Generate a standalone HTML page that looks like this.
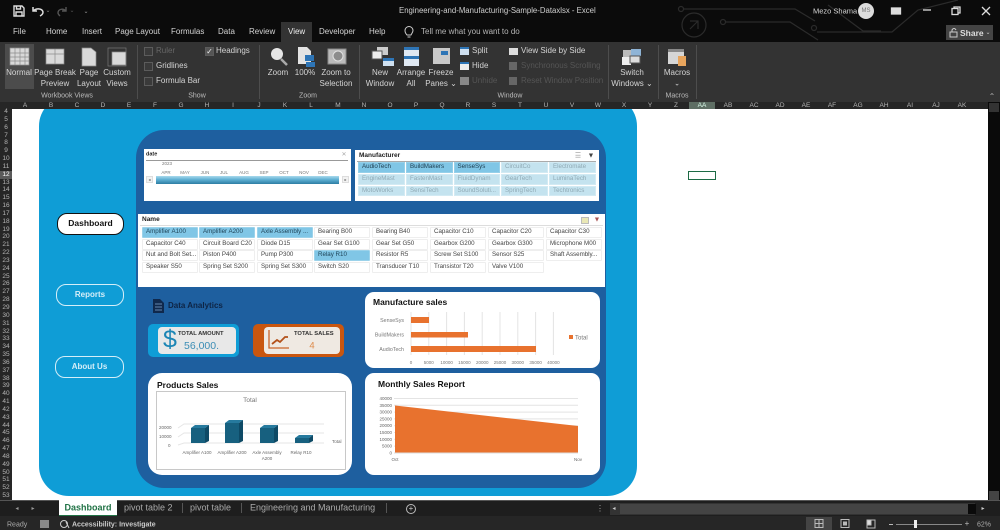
<!DOCTYPE html>
<html><head><meta charset="utf-8"><style>
html,body{margin:0;padding:0;background:#000}
#p{position:relative;width:1000px;height:530px;overflow:hidden;background:#0b0b0b;font-family:"Liberation Sans",sans-serif;filter:blur(.35px)}
#p div,#p span.t,#p span.l{position:absolute}
.t{white-space:nowrap;line-height:1;font-size:8px;color:#d4d4d4;transform:translate(-50%,-50%)}
.l{white-space:nowrap;line-height:1;font-size:8px;color:#d4d4d4;transform:translateY(-50%)}
.cb{width:9px;height:9px;border:1px solid #5c5c5c;box-sizing:border-box;background:#3a3a3a}
.sep{width:1px;top:45px;height:54px;background:#4d4d4d}
#cols{left:12px;top:102px;width:976px;height:7px;background:#262626}
#cols span{position:absolute;top:0;width:26px;text-align:center;font-size:6.5px;line-height:7px;color:#b5b5b5}
#rows{left:0;top:108px;width:12px;height:392px;background:#262626}
#rows span{position:absolute;left:0;width:12px;text-align:center;font-size:6.5px;line-height:8px;color:#b5b5b5}
.b{box-sizing:border-box;height:10.5px;width:56px;background:#fff;border:1px solid #eee;border-radius:1px;font-size:6.2px;line-height:8.5px;color:#444;padding-left:3px;white-space:nowrap;overflow:hidden}
.s{background:#80c6e6;border-color:#9bd2ea;color:#21465a}
.m{box-sizing:border-box;width:46.5px;height:10.5px;background:#c4e3ef;border:1px solid #d2eaf3;font-size:6.2px;line-height:8.5px;color:#8fa9b4;padding-left:3px;white-space:nowrap;overflow:hidden}
.ms{background:#80c6e6;color:#1d3c4e;border-color:#96d0e9}
.nav{box-sizing:border-box;border-radius:10px;text-align:center;font-size:8px;line-height:19px;height:22px;border:1.5px solid #d5eef8;color:#d6eef8;background:#0f9dd6}
svg text{font-family:"Liberation Sans",sans-serif}
</style></head><body><div id="p">

<!-- title bar art -->
<svg style="position:absolute;left:660px;top:0" width="340" height="42" fill="none" stroke="#2b2b2b" stroke-width="1.2">
<circle cx="21" cy="9" r="2.5"/><path d="M24 9H135l20 12h0"/><circle cx="63" cy="22" r="2.5"/><path d="M66 22H130l28 18"/><circle cx="34" cy="25" r="12"/><path d="M30 29l8-8M30 21h8v8" /><circle cx="154" cy="28" r="2.5"/><path d="M157 32H232l26-22 40-10"/><path d="M168 5l35 26h18"/>
</svg>

<!-- quick access -->
<svg style="position:absolute;left:13px;top:5px" width="12" height="12" fill="none" stroke="#ddd" stroke-width="1.4"><path d="M1 1h8l2 2v8H1z"/><path d="M3.5 1v3h4V1M3 11V7h6v4"/></svg>
<svg style="position:absolute;left:31px;top:5px" width="14" height="12" fill="none" stroke="#ddd" stroke-width="1.5"><path d="M2 2v4h4M2 6c3-3 9-3 10 1 0 2-1 3-3 4"/></svg>
<span class="t" style="left:48px;top:11px;font-size:6px;color:#888">⌄</span>
<svg style="position:absolute;left:56px;top:5px" width="12" height="12" fill="none" stroke="#555" stroke-width="1.4"><path d="M10 2v4H6M10 6C7 3 2 4 2 8c0 1 1 2 2 3"/></svg>
<span class="t" style="left:72px;top:11px;font-size:6px;color:#555">⌄</span>
<span class="t" style="left:86px;top:12px;font-size:6px;color:#999">⌄</span>

<span class="l" style="left:399px;top:11px;font-size:7.8px;color:#cfcfcf">Engineering-and-Manufacturing-Sample-Dataxlsx  -  Excel</span>
<span class="l" style="left:813px;top:11px;font-size:7.5px;color:#d4d4d4">Mezo Shama</span>
<div style="left:858px;top:3px;width:16px;height:16px;border-radius:50%;background:#dcdcdc"></div>
<span class="t" style="left:866px;top:11px;font-size:6px;color:#777">MS</span>
<svg style="position:absolute;left:890px;top:4px" width="110" height="14" fill="none" stroke="#ddd" stroke-width="1.3"><rect x="1.5" y="4" width="9" height="6" fill="#ddd"/><path d="M33 6h8"/><rect x="62" y="4.500" width="6" height="6"/><path d="M64 4.500v-1.500h6v6h-2"/><path d="M92 3l8 8M100 3l-8 8"/></svg>

<!-- menu -->
<div style="left:281px;top:22px;width:31px;height:20px;background:#333"></div>
<span class="l" style="left:13px;top:32px">File</span>
<span class="l" style="left:46px;top:32px">Home</span>
<span class="l" style="left:82px;top:32px">Insert</span>
<span class="l" style="left:115px;top:32px">Page Layout</span>
<span class="l" style="left:171px;top:32px">Formulas</span>
<span class="l" style="left:218px;top:32px">Data</span>
<span class="l" style="left:249px;top:32px">Review</span>
<span class="l" style="left:288px;top:32px;color:#eee">View</span>
<span class="l" style="left:319px;top:32px">Developer</span>
<span class="l" style="left:369px;top:32px">Help</span>
<svg style="position:absolute;left:404px;top:26px" width="10" height="13" fill="none" stroke="#ccc" stroke-width="1"><path d="M3 9C1 7 1 5 1 4.500a4 4 0 0 1 8 0C9 6 8 7 7 9zM3.500 11h3"/></svg>
<span class="l" style="left:421px;top:32px;color:#b5b5b5">Tell me what you want to do</span>
<div style="left:946px;top:25px;width:47px;height:15px;background:#444"></div>
<svg style="position:absolute;left:949px;top:27px" width="10" height="11" fill="none" stroke="#ccc"><path d="M1 5h7v5H1zM3 5V3c1-2 3-2 4 0"/></svg>
<span class="l" style="left:960px;top:32.500px;font-size:8.500px;font-weight:bold;color:#ddd">Share</span>
<span class="t" style="left:988px;top:33px;font-size:6px;color:#ccc">⌄</span>

<!-- ribbon -->
<div style="left:0;top:42px;width:1000px;height:60px;background:#333"></div>
<div style="left:5px;top:44px;width:29px;height:45px;background:#4c4c4c"></div>

<!-- ribbon icons -->
<svg style="position:absolute;left:0;top:42px" width="720" height="34">
<g fill="#d9d9d9" stroke="#8c8c8c" stroke-width=".7">
<path d="M10 6h19v17H10zM10 11h19M10 15h19M10 19h19M15 6v17M20 6v17M25 6v17"/>
<path d="M46 7h18v15H46zM55 7v15M46 12h18"/>
<path d="M82 6h9l5 4v14H82z"/>
<path d="M112 10h14v13h-14z"/>
</g>
<rect x="108" y="6" width="18" height="18" fill="none" stroke="#777" stroke-width=".7"/>
<circle cx="277" cy="12" r="6" fill="#e6e6e6"/><path d="M281 17l6 6" stroke="#aaa" stroke-width="2.500"/>
<path d="M298 5h9l4 4v13h-13z" fill="#e4e4e4"/><rect x="305" y="13" width="9" height="6" fill="#2e75b6"/><rect x="306" y="20" width="9" height="5" fill="#2e75b6"/>
<rect x="328" y="7" width="18" height="15" fill="#bbb" stroke="#888"/><circle cx="338" cy="14" r="5" fill="#8c8c8c" stroke="#e0e0e0"/>
<rect x="377" y="5" width="11" height="8" fill="#ccc"/><rect x="372" y="9" width="10" height="8" fill="#eee" stroke="#555"/><rect x="383" y="16" width="11" height="8" fill="#cfe0f0"/><rect x="383" y="16" width="11" height="3" fill="#2e75b6"/>
<rect x="404" y="5" width="15" height="19" fill="#dfe8f2"/><rect x="404" y="5" width="15" height="3" fill="#2e75b6"/><rect x="404" y="14" width="15" height="3" fill="#2e75b6"/>
<rect x="433" y="6" width="17" height="16" fill="#c9c9c9"/><rect x="441" y="9" width="7" height="4" fill="#2e75b6"/>
<rect x="623" y="8" width="9" height="7" fill="#bbb"/><rect x="622" y="15" width="9" height="8" fill="#eee"/><rect x="631" y="7" width="10" height="7" fill="#8fb4d6"/><rect x="630" y="14" width="10" height="7" fill="#ddd" stroke="#555"/>
<rect x="668" y="7" width="16" height="15" fill="#d6d6d6"/><rect x="668" y="7" width="16" height="3" fill="#888"/><rect x="678" y="14" width="8" height="10" fill="#e8a55d"/>
</svg>

<span class="t" style="left:19px;top:73px">Normal</span>
<span class="t" style="left:55px;top:73px">Page Break</span><span class="t" style="left:55px;top:84px">Preview</span>
<span class="t" style="left:89px;top:73px">Page</span><span class="t" style="left:89px;top:84px">Layout</span>
<span class="t" style="left:117px;top:73px">Custom</span><span class="t" style="left:117px;top:84px">Views</span>
<span class="t" style="left:67px;top:96px;font-size:7px;color:#bbb">Workbook Views</span>
<div class="sep" style="left:137px"></div>
<div class="cb" style="left:144px;top:47px"></div><span class="l" style="left:156px;top:51px;color:#666">Ruler</span>
<div class="cb" style="left:144px;top:62px"></div><span class="l" style="left:156px;top:66px">Gridlines</span>
<div class="cb" style="left:144px;top:77px"></div><span class="l" style="left:156px;top:81px">Formula Bar</span>
<div class="cb" style="left:205px;top:47px;background:#555"></div><span class="t" style="left:209.500px;top:51.500px;font-size:8px;color:#eee">✓</span><span class="l" style="left:216px;top:51px">Headings</span>
<span class="t" style="left:197px;top:96px;font-size:7px;color:#bbb">Show</span>
<div class="sep" style="left:259px"></div>
<span class="t" style="left:278px;top:73px">Zoom</span>
<span class="t" style="left:305px;top:73px">100%</span>
<span class="t" style="left:336px;top:73px">Zoom to</span><span class="t" style="left:336px;top:84px">Selection</span>
<span class="t" style="left:308px;top:96px;font-size:7px;color:#bbb">Zoom</span>
<div class="sep" style="left:359px"></div>
<span class="t" style="left:380px;top:73px">New</span><span class="t" style="left:380px;top:84px">Window</span>
<span class="t" style="left:411px;top:73px">Arrange</span><span class="t" style="left:411px;top:84px">All</span>
<span class="t" style="left:441px;top:73px">Freeze</span><span class="t" style="left:441px;top:84px">Panes ⌄</span>
<div style="left:460px;top:47px;width:9px;height:8px;background:#cfe0f0;border-top:2px solid #2e75b6;box-sizing:border-box"></div><span class="l" style="left:472px;top:51px">Split</span>
<div style="left:460px;top:62px;width:9px;height:8px;background:#eee;border-top:2px solid #2e75b6;box-sizing:border-box"></div><span class="l" style="left:472px;top:66px">Hide</span>
<div style="left:460px;top:77px;width:9px;height:8px;background:#888"></div><span class="l" style="left:472px;top:81px;color:#555">Unhide</span>
<div style="left:509px;top:48px;width:9px;height:7px;background:#ddd"></div><span class="l" style="left:521px;top:51px">View Side by Side</span>
<div style="left:509px;top:62px;width:8px;height:8px;background:#666"></div><span class="l" style="left:521px;top:66px;color:#555">Synchronous Scrolling</span>
<div style="left:509px;top:77px;width:8px;height:8px;background:#666"></div><span class="l" style="left:521px;top:81px;color:#555">Reset Window Position</span>
<span class="t" style="left:510px;top:96px;font-size:7px;color:#bbb">Window</span>
<div class="sep" style="left:608px"></div>
<span class="t" style="left:632px;top:73px">Switch</span><span class="t" style="left:632px;top:84px">Windows ⌄</span>
<div class="sep" style="left:658px"></div>
<span class="t" style="left:677px;top:73px">Macros</span><span class="t" style="left:677px;top:84px;font-size:7px">⌄</span>
<span class="t" style="left:677px;top:96px;font-size:7px;color:#bbb">Macros</span>
<div class="sep" style="left:696px"></div>
<span class="t" style="left:992px;top:97px;font-size:8px;color:#aaa">⌃</span>

<!-- column headers -->
<div style="left:0;top:102px;width:1000px;height:7px;background:#262626"></div>
<div id="cols" style="background:none">
<span style="left:0">A</span><span style="left:26px">B</span><span style="left:52px">C</span><span style="left:78px">D</span><span style="left:104px">E</span><span style="left:130px">F</span><span style="left:156px">G</span><span style="left:182px">H</span><span style="left:208px">I</span><span style="left:234px">J</span><span style="left:260px">K</span><span style="left:286px">L</span><span style="left:313px">M</span><span style="left:339px">N</span><span style="left:365px">O</span><span style="left:391px">P</span><span style="left:417px">Q</span><span style="left:443px">R</span><span style="left:469px">S</span><span style="left:495px">T</span><span style="left:521px">U</span><span style="left:547px">V</span><span style="left:573px">W</span><span style="left:599px">X</span><span style="left:625px">Y</span><span style="left:651px">Z</span>
<span style="left:677px;background:#5e6e64;color:#dfe">AA</span><span style="left:703px">AB</span><span style="left:729px">AC</span><span style="left:755px">AD</span><span style="left:781px">AE</span><span style="left:807px">AF</span><span style="left:833px">AG</span><span style="left:859px">AH</span><span style="left:885px">AI</span><span style="left:911px">AJ</span><span style="left:937px">AK</span>
</div>

<!-- sheet -->
<div style="left:12px;top:109px;width:976px;height:391px;background:#fff"></div>
<div style="left:988px;top:102px;width:12px;height:398px;background:#0a0a0a"></div>
<div style="left:989px;top:103px;width:10px;height:9px;background:#333"></div>
<div style="left:989px;top:491px;width:10px;height:9px;background:#444"></div>

<!-- row headers -->
<div id="rows">
<span style="top:0">4</span><span style="top:8px">5</span><span style="top:16px">6</span><span style="top:24px">7</span><span style="top:31px">8</span><span style="top:39px">9</span><span style="top:47px">10</span><span style="top:55px">11</span><span style="top:63px;background:#5a5a5a;color:#fff">12</span><span style="top:71px">13</span><span style="top:78px">14</span><span style="top:86px">15</span><span style="top:94px">16</span><span style="top:102px">17</span><span style="top:110px">18</span><span style="top:118px">19</span><span style="top:125px">20</span><span style="top:133px">21</span><span style="top:141px">22</span><span style="top:149px">23</span><span style="top:157px">24</span><span style="top:165px">25</span><span style="top:172px">26</span><span style="top:180px">27</span><span style="top:188px">28</span><span style="top:196px">29</span><span style="top:204px">30</span><span style="top:212px">31</span><span style="top:220px">32</span><span style="top:227px">33</span><span style="top:235px">34</span><span style="top:243px">35</span><span style="top:251px">36</span><span style="top:259px">37</span><span style="top:267px">38</span><span style="top:274px">39</span><span style="top:282px">40</span><span style="top:290px">41</span><span style="top:298px">42</span><span style="top:306px">43</span><span style="top:314px">44</span><span style="top:321px">45</span><span style="top:329px">46</span><span style="top:337px">47</span><span style="top:345px">48</span><span style="top:353px">49</span><span style="top:361px">50</span><span style="top:368px">51</span><span style="top:376px">52</span><span style="top:384px">53</span>
</div>

<!-- selected cell -->
<div style="left:688px;top:171px;width:28px;height:9px;border:1.5px solid #1d6b45;box-sizing:border-box;background:#fff"></div>

<!-- outer panel -->
<div style="left:39px;top:96px;width:598px;height:400px;background:#0f9dd6;border-radius:30px;clip-path:inset(13px 0 0 0)"></div>
<div style="left:136px;top:130px;width:470px;height:358px;background:#1e5f9f;border-radius:28px"></div>

<!-- nav -->
<div class="nav" style="left:57px;top:213px;width:67px;background:#fff;border-color:#111;color:#111;font-weight:bold;font-size:8.500px">Dashboard</div>
<div class="nav" style="left:56px;top:284px;width:68px;font-weight:bold">Reports</div>
<div class="nav" style="left:55px;top:356px;width:69px;font-weight:bold">About Us</div>

<!-- date slicer -->
<div style="left:144px;top:149px;width:207px;height:52px;background:#fff"></div>
<span class="l" style="left:146px;top:154.500px;font-size:5.500px;font-weight:bold;color:#222">date</span>
<div style="left:146px;top:160px;width:202px;height:1px;background:#999"></div>
<span class="t" style="left:344px;top:155px;font-size:6px;color:#aaa">✕</span>
<span class="l" style="left:162px;top:164px;font-size:4.500px;color:#777">2023</span>
<span class="t" style="left:166px;top:172.500px;font-size:4.500px;color:#777">APR</span><span class="t" style="left:185px;top:172.500px;font-size:4.500px;color:#777">MAY</span><span class="t" style="left:205px;top:172.500px;font-size:4.500px;color:#777">JUN</span><span class="t" style="left:224px;top:172.500px;font-size:4.500px;color:#777">JUL</span><span class="t" style="left:244px;top:172.500px;font-size:4.500px;color:#777">AUG</span><span class="t" style="left:264px;top:172.500px;font-size:4.500px;color:#777">SEP</span><span class="t" style="left:284px;top:172.500px;font-size:4.500px;color:#777">OCT</span><span class="t" style="left:304px;top:172.500px;font-size:4.500px;color:#777">NOV</span><span class="t" style="left:323px;top:172.500px;font-size:4.500px;color:#777">DEC</span>
<div style="left:156px;top:176px;width:183px;height:7.500px;background:linear-gradient(#a9d9ec,#5fb0d3 45%,#2c7da3)"></div>
<div style="left:146px;top:176px;width:7px;height:7px;background:#f2f2f2;border:1px solid #ddd;box-sizing:border-box"></div>
<div style="left:342px;top:176px;width:7px;height:7px;background:#f2f2f2;border:1px solid #ddd;box-sizing:border-box"></div>
<span class="t" style="left:149.500px;top:179.500px;font-size:4px;color:#555">◂</span>
<span class="t" style="left:345.500px;top:179.500px;font-size:4px;color:#555">▸</span>

<!-- manufacturer slicer -->
<div style="left:355px;top:150px;width:244px;height:51px;background:#fff"></div>
<span class="l" style="left:359px;top:156px;font-size:6.500px;font-weight:bold;color:#222">Manufacturer</span>
<div style="left:357px;top:161px;width:239px;height:1px;background:#aaa"></div>
<span class="t" style="left:578px;top:156px;font-size:7px;color:#999">☰</span>
<span class="t" style="left:591px;top:156px;font-size:7px;color:#444">▼</span>

<div class="m ms" style="left:358px;top:162px">AudioTech</div><div class="m ms" style="left:406px;top:162px">BuildMakers</div><div class="m ms" style="left:453.500px;top:162px">SenseSys</div><div class="m" style="left:501px;top:162px">CircuitCo</div><div class="m" style="left:549px;top:162px">Electromate</div>
<div class="m" style="left:358px;top:174px">EngineMast</div><div class="m" style="left:406px;top:174px">FastenMast</div><div class="m" style="left:453.500px;top:174px">FluidDynam</div><div class="m" style="left:501px;top:174px">GearTech</div><div class="m" style="left:549px;top:174px">LuminaTech</div>
<div class="m" style="left:358px;top:185.500px">MotoWorks</div><div class="m" style="left:406px;top:185.500px">SensiTech</div><div class="m" style="left:453.500px;top:185.500px">SoundSoluti...</div><div class="m" style="left:501px;top:185.500px">SpringTech</div><div class="m" style="left:549px;top:185.500px">Techtronics</div>

<!-- name slicer -->
<div style="left:138px;top:214px;width:467px;height:73px;background:#fff"></div>
<span class="l" style="left:142px;top:220px;font-size:6.500px;font-weight:bold;color:#222">Name</span>
<div style="left:140px;top:225px;width:463px;height:1px;background:#ddd"></div>
<div style="left:581px;top:217px;width:8px;height:7px;background:#e9e7b5;border:1px solid #bbb;box-sizing:border-box"></div>
<span class="t" style="left:597px;top:220px;font-size:7px;color:#a55">▼</span>

<div class="b s" style="left:142px;top:227px">Amplifier A100</div><div class="b s" style="left:199px;top:227px">Amplifier A200</div><div class="b s" style="left:257px;top:227px">Axle Assembly ...</div><div class="b" style="left:314px;top:227px">Bearing B00</div><div class="b" style="left:372px;top:227px">Bearing B40</div><div class="b" style="left:430px;top:227px">Capacitor C10</div><div class="b" style="left:488px;top:227px">Capacitor C20</div><div class="b" style="left:546px;top:227px">Capacitor C30</div>
<div class="b" style="left:142px;top:239px">Capacitor C40</div><div class="b" style="left:199px;top:239px">Circuit Board C20</div><div class="b" style="left:257px;top:239px">Diode D15</div><div class="b" style="left:314px;top:239px">Gear Set G100</div><div class="b" style="left:372px;top:239px">Gear Set G50</div><div class="b" style="left:430px;top:239px">Gearbox G200</div><div class="b" style="left:488px;top:239px">Gearbox G300</div><div class="b" style="left:546px;top:239px">Microphone M00</div>
<div class="b" style="left:142px;top:250px">Nut and Bolt Set...</div><div class="b" style="left:199px;top:250px">Piston P400</div><div class="b" style="left:257px;top:250px">Pump P300</div><div class="b s" style="left:314px;top:250px">Relay R10</div><div class="b" style="left:372px;top:250px">Resistor R5</div><div class="b" style="left:430px;top:250px">Screw Set S100</div><div class="b" style="left:488px;top:250px">Sensor S25</div><div class="b" style="left:546px;top:250px">Shaft Assembly...</div>
<div class="b" style="left:142px;top:262px">Speaker S50</div><div class="b" style="left:199px;top:262px">Spring Set S200</div><div class="b" style="left:257px;top:262px">Spring Set S300</div><div class="b" style="left:314px;top:262px">Switch S20</div><div class="b" style="left:372px;top:262px">Transducer T10</div><div class="b" style="left:430px;top:262px">Transistor T20</div><div class="b" style="left:488px;top:262px">Valve V100</div>

<!-- data analytics -->
<svg style="position:absolute;left:152px;top:298px" width="13" height="16"><path d="M1 1h7l4 4v10H1z" fill="#10294d"/><path d="M3 6h7M3 9h7M3 12h7" stroke="#7fa6cf" stroke-width=".8"/></svg>
<span class="l" style="left:168px;top:306px;font-size:8px;font-weight:bold;color:#0e2444">Data Analytics</span>

<!-- KPI -->
<div style="left:148px;top:324px;width:91px;height:33px;background:#0f9dd6;border-radius:5px"></div>
<div style="left:158px;top:327px;width:78px;height:27px;background:#e8e8e8;border-radius:4px"></div>
<span class="t" style="left:170px;top:340px;font-size:25px;color:#1d86b5">$</span>
<span class="l" style="left:178px;top:335px;font-size:5.800px;font-weight:bold;color:#333">TOTAL AMOUNT</span>
<span class="l" style="left:184px;top:346px;font-size:10.500px;color:#3b8db5">56,000.</span>

<div style="left:253px;top:324px;width:91px;height:33px;background:#c9560f;border-radius:5px"></div>
<div style="left:264px;top:327px;width:76px;height:27px;background:#efe9e2;border-radius:4px"></div>
<svg style="position:absolute;left:267px;top:328px" width="24" height="24" fill="none"><path d="M2 2v18h20" stroke="#c9652a" stroke-width="1.300"/><path d="M5 16l5-4 3 2 5-5 3 0" stroke="#b3511a" stroke-width="1.800"/></svg>
<span class="l" style="left:294px;top:335px;font-size:5.800px;font-weight:bold;color:#333">TOTAL SALES</span>
<span class="t" style="left:312px;top:345.500px;font-size:9.500px;color:#dd8a4a">4</span>

<!-- Products card -->
<div style="left:148px;top:373px;width:204px;height:102px;background:#fff;border-radius:14px"></div>
<span class="l" style="left:157px;top:384.500px;font-size:8.500px;font-weight:bold;color:#111">Products Sales</span>
<svg style="position:absolute;left:156px;top:391px" width="190" height="79">
<rect x=".5" y=".5" width="189" height="78" fill="#fff" stroke="#c8c8c8"/>
<text x="94" y="11" font-size="6.500" fill="#777" text-anchor="middle">Total</text>
<path d="M22 37l6-4H168M22 46l6-4H168M22 54l6-2H168" stroke="#e6e6e6" fill="none"/>
<text x="3" y="38" font-size="4.500" fill="#666">20000</text><text x="3" y="47" font-size="4.500" fill="#666">10000</text><text x="12" y="56" font-size="4.500" fill="#666">0</text>
<g>
<path d="M35 37h14l4-3H39z" fill="#267a9e"/><path d="M49 37l4-3v16l-4 2z" fill="#0e4a66"/><rect x="35" y="37" width="14" height="15" fill="#17607f"/>
<path d="M69 32h14l4-3H73z" fill="#267a9e"/><path d="M83 32l4-3v21l-4 2z" fill="#0e4a66"/><rect x="69" y="32" width="14" height="20" fill="#17607f"/>
<path d="M104 37h14l4-3h-14z" fill="#267a9e"/><path d="M118 37l4-3v16l-4 2z" fill="#0e4a66"/><rect x="104" y="37" width="14" height="15" fill="#17607f"/>
<path d="M139 47h14l4-3h-14z" fill="#267a9e"/><path d="M153 47l4-3v6l-4 2z" fill="#0e4a66"/><rect x="139" y="47" width="14" height="5" fill="#17607f"/>
</g>
<text x="41" y="63" font-size="4.500" fill="#666" text-anchor="middle">Amplifier A100</text>
<text x="76" y="63" font-size="4.500" fill="#666" text-anchor="middle">Amplifier A200</text>
<text x="111" y="63" font-size="4.500" fill="#666" text-anchor="middle">Axle Assembly</text>
<text x="111" y="69" font-size="4.500" fill="#666" text-anchor="middle">A200</text>
<text x="145" y="63" font-size="4.500" fill="#666" text-anchor="middle">Relay R10</text>
<text x="176" y="52" font-size="4.500" fill="#666">Total</text>
</svg>

<!-- Manufacture card -->
<div style="left:365px;top:292px;width:235px;height:76px;background:#fff;border-radius:9px"></div>
<span class="l" style="left:373px;top:302px;font-size:8.500px;font-weight:bold;color:#111">Manufacture sales</span>
<svg style="position:absolute;left:365px;top:292px" width="235" height="76">
<path d="M46 20v43M63.800 20v43M81.600 20v43M99.400 20v43M117.200 20v43M135 20v43M152.800 20v43M170.600 20v43M188.400 20v43" stroke="#e4e4e4" fill="none"/>
<rect x="46" y="25" width="18" height="6" fill="#e8722e"/>
<rect x="46" y="40" width="57" height="5.500" fill="#e8722e"/>
<rect x="46" y="54" width="125" height="6" fill="#e8722e"/>
<g font-size="5.300" fill="#777" text-anchor="end"><text x="39" y="30">SenseSys</text><text x="39" y="44.500">BuildMakers</text><text x="39" y="59">AudioTech</text></g>
<g font-size="4.500" fill="#777" text-anchor="middle"><text x="46" y="72">0</text><text x="63.800" y="72">5000</text><text x="81.600" y="72">10000</text><text x="99.400" y="72">15000</text><text x="117.200" y="72">20000</text><text x="135" y="72">25000</text><text x="152.800" y="72">30000</text><text x="170.600" y="72">35000</text><text x="188.400" y="72">40000</text></g>
<rect x="204" y="43" width="4" height="4" fill="#e8722e"/><text x="210" y="47.500" font-size="6" fill="#777">Total</text>
</svg>

<!-- Monthly card -->
<div style="left:365px;top:373px;width:235px;height:102px;background:#fff;border-radius:9px"></div>
<span class="l" style="left:378px;top:384px;font-size:8.500px;font-weight:bold;color:#111">Monthly Sales Report</span>
<svg style="position:absolute;left:365px;top:373px" width="235" height="102">
<path d="M29 25.500H213M29 32.300H213M29 39.100H213M29 45.900H213M29 52.700H213M29 59.500H213M29 66.300H213M29 73.100H213" stroke="#e4e4e4" fill="none"/>
<path d="M30 32.500L213 53V80H30z" fill="#e8722e"/>
<path d="M29 80H213" stroke="#ddd" fill="none"/>
<g font-size="4.500" fill="#666" text-anchor="end"><text x="27" y="27">40000</text><text x="27" y="33.800">35000</text><text x="27" y="40.600">30000</text><text x="27" y="47.400">25000</text><text x="27" y="54.200">20000</text><text x="27" y="61">15000</text><text x="27" y="67.800">10000</text><text x="27" y="74.600">5000</text><text x="27" y="81.400">0</text></g>
<text x="30" y="88" font-size="4.500" fill="#666" text-anchor="middle">Oct</text><text x="213" y="88" font-size="4.500" fill="#666" text-anchor="middle">Nov</text>
</svg>

<!-- tabs bar -->
<div style="left:0;top:500px;width:1000px;height:16px;background:#1e1e1e;border-top:1px solid #555;box-sizing:border-box"></div>
<span class="t" style="left:17px;top:509px;font-size:6px;color:#999">◂</span><span class="t" style="left:33px;top:509px;font-size:6px;color:#999">▸</span>
<div style="left:59px;top:500px;width:58px;height:16px;background:#fff;border-bottom:1px solid #217346;box-sizing:border-box"></div>
<span class="t" style="left:88px;top:508px;font-size:9px;font-weight:bold;color:#217346">Dashboard</span>
<span class="l" style="left:124px;top:508px;font-size:9px;color:#aaa">pivot table 2</span>
<div style="left:182px;top:503px;width:1px;height:10px;background:#555"></div>
<span class="l" style="left:190px;top:508px;font-size:9px;color:#aaa">pivot table</span>
<div style="left:241px;top:503px;width:1px;height:10px;background:#555"></div>
<span class="l" style="left:250px;top:508px;font-size:9px;color:#aaa">Engineering and Manufacturing</span>
<div style="left:386px;top:503px;width:1px;height:10px;background:#555"></div>
<div style="left:406px;top:504px;width:10px;height:10px;border:1px solid #bbb;border-radius:50%;box-sizing:border-box"></div>
<span class="t" style="left:411px;top:509px;font-size:8px;color:#ccc">+</span>
<span class="t" style="left:600px;top:509px;font-size:8px;color:#aaa">⋮</span>
<div style="left:610px;top:503px;width:365px;height:12px;background:#333"></div>
<div style="left:620px;top:504px;width:348px;height:10px;background:#444"></div>
<div style="left:968px;top:504px;width:8px;height:10px;background:#0a0a0a"></div>
<span class="t" style="left:614px;top:509px;font-size:6px;color:#ccc">◂</span>
<span class="t" style="left:983px;top:509px;font-size:6px;color:#ccc">▸</span>

<!-- status bar -->
<div style="left:0;top:516px;width:1000px;height:14px;background:#262626"></div>
<span class="l" style="left:7px;top:524.500px;font-size:7px;color:#aaa">Ready</span>
<div style="left:40px;top:520px;width:9px;height:8px;background:#888"></div>
<svg style="position:absolute;left:60px;top:519px" width="10" height="10" fill="none" stroke="#ccc"><circle cx="4" cy="5" r="3.500"/><path d="M6 3l3 6"/></svg>
<span class="l" style="left:72px;top:524.500px;font-size:7px;font-weight:bold;color:#ccc">Accessibility: Investigate</span>
<div style="left:806px;top:517px;width:26px;height:13px;background:#444"></div>
<svg style="position:absolute;left:810px;top:518px" width="170" height="11" fill="none" stroke="#bbb"><path d="M5 1.500h8v8H5zM9 1.500v8M5 5.500h8"/><rect x="31" y="1.500" width="8" height="8"/><rect x="33.500" y="4" width="3" height="3" fill="#bbb"/><path d="M57 2h8v8h-8z"/><path d="M57 2h4v5h-4z" fill="#ddd"/></svg>
<div style="left:889px;top:524px;width:4px;height:1px;background:#bbb"></div>
<div style="left:896px;top:524px;width:66px;height:1px;background:#888"></div>
<div style="left:914px;top:520px;width:3px;height:8px;background:#eee"></div>
<span class="t" style="left:967px;top:524px;font-size:8px;color:#bbb">+</span>
<span class="t" style="left:984px;top:524.500px;font-size:7px;color:#aaa">62%</span>

</div></body></html>
